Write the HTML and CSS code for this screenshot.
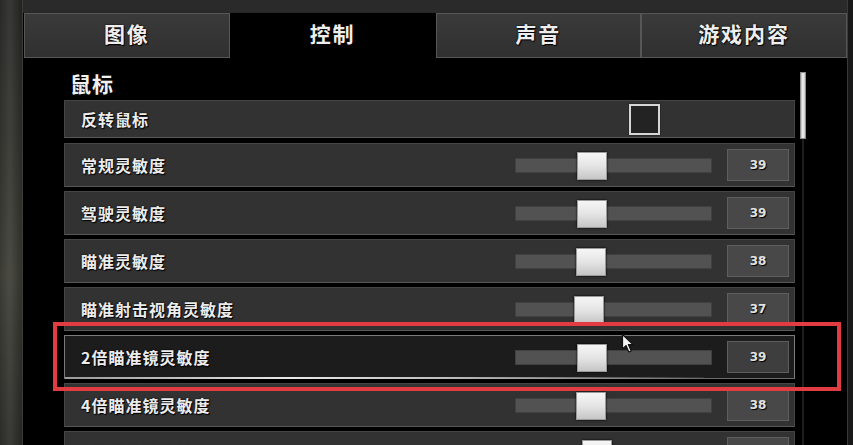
FILE: index.html
```html
<!DOCTYPE html>
<html lang="zh-CN">
<head>
<meta charset="utf-8">
<title>设置 - 控制</title>
<link rel="stylesheet" href="styles.css">
</head>
<body>
<div class="screen">
  <div class="edge-left"></div>
  <div class="main">
    <nav class="tabs">
      <div class="tab">图像</div>
      <div class="tab active">控制</div>
      <div class="tab">声音</div>
      <div class="tab">游戏内容</div>
    </nav>
    <div class="panel">
      <div class="content">
        <h2 class="section-title">鼠标</h2>
        <div class="rows">
          <div class="row row-toggle">
            <span class="label">反转鼠标</span>
            <span class="checkbox"></span>
          </div>
          <div class="row">
            <span class="label">常规灵敏度</span>
            <div class="slider"><div class="thumb" style="left:61px"></div></div>
            <div class="value">39</div>
          </div>
          <div class="row">
            <span class="label">驾驶灵敏度</span>
            <div class="slider"><div class="thumb" style="left:61px"></div></div>
            <div class="value">39</div>
          </div>
          <div class="row">
            <span class="label">瞄准灵敏度</span>
            <div class="slider"><div class="thumb" style="left:60px"></div></div>
            <div class="value">38</div>
          </div>
          <div class="row">
            <span class="label">瞄准射击视角灵敏度</span>
            <div class="slider"><div class="thumb" style="left:58px"></div></div>
            <div class="value">37</div>
          </div>
          <div class="row focus">
            <span class="label">2倍瞄准镜灵敏度</span>
            <div class="slider"><div class="thumb" style="left:61px"></div></div>
            <div class="value">39</div>
          </div>
          <div class="row">
            <span class="label">4倍瞄准镜灵敏度</span>
            <div class="slider"><div class="thumb" style="left:60px"></div></div>
            <div class="value">38</div>
          </div>
          <div class="row">
            <span class="label">8倍瞄准镜灵敏度</span>
            <div class="slider"><div class="thumb" style="left:66px"></div></div>
            <div class="value">41</div>
          </div>
        </div>
      </div>
      <div class="scrollbar">
        <div class="scroll-thumb"></div>
        <div class="scroll-track"></div>
      </div>
    </div>
  </div>
  <div class="edge-right"></div>

  <div class="callout"></div>
  <svg class="cursor" width="16" height="22" viewBox="0 0 16 22">
    <path d="M1.5 1.5 L1.5 16 L5 12.6 L7.8 19 L10.2 18 L7.4 11.6 L12 11.6 Z" fill="#f4f4f4" stroke="#111" stroke-width="1.2" stroke-linejoin="round"/>
  </svg>
</div>
</body>
</html>
```

FILE: styles.css
```css
* { box-sizing: border-box; }

html, body {
  margin: 0;
  padding: 0;
  background: #111;
}

.screen {
  position: relative;
  width: 853px;
  height: 445px;
  overflow: hidden;
  display: flex;
  font-family: "Noto Sans CJK SC", "Noto Sans", sans-serif;
  color: #ececec;
}

.edge-left {
  width: 23px;
  flex: none;
  background:
    linear-gradient(to right, rgba(0,0,0,0.1), rgba(255,255,255,0.05) 45%, rgba(0,0,0,0.25)),
    linear-gradient(to bottom, #2d2d2b 0%, #363631 30%, #42423b 62%, #30302c 100%);
  border-right: 1px solid #3c3c3a;
}

.edge-right {
  width: 6px;
  flex: none;
  background: #181818;
  border-left: 1px solid #3a3a3a;
}

.main {
  flex: 1;
  min-width: 0;
  display: flex;
  flex-direction: column;
  background: #2a2a2a;
  padding-top: 12px;
}

.tabs {
  flex: none;
  display: grid;
  grid-template-columns: repeat(4, 1fr);
  height: 46px;
  padding-left: 1px;
  background: #000;
  border-top: 1px solid #262626;
}

.tab {
  display: flex;
  align-items: center;
  justify-content: center;
  padding-bottom: 6px;
  background: linear-gradient(to bottom, #3a3a3a, #303030);
  border: 1px solid #575757;
  font-size: 21px;
  font-weight: 700;
  letter-spacing: 2px;
  color: #eeeeee;
  text-shadow: 1px 1px 1px #000, 0 0 2px #000;
}

.tab.active {
  background: #000;
  border-color: #000;
}

.panel {
  flex: 1;
  min-height: 0;
  overflow: hidden;
  display: flex;
  background: #000;
  padding-left: 41px;
  padding-top: 12px;
}

.content {
  width: 731px;
  flex: none;
}

.section-title {
  margin: 0 0 4px 0;
  padding-left: 6px;
  font-size: 21px;
  line-height: 26px;
  font-weight: 700;
  letter-spacing: 1px;
  color: #f0f0f0;
  text-shadow: 1px 1px 1px #000;
}

.rows {
  display: flex;
  flex-direction: column;
  gap: 4px;
}

.row {
  position: relative;
  flex: none;
  display: flex;
  align-items: center;
  height: 44px;
  padding: 0 5px 0 16px;
  background: #323232;
  border: 1px solid #454545;
  border-bottom-color: #575757;
}

.row-toggle {
  height: 38px;
  margin-bottom: 1px;
}

.label {
  flex: 1;
  font-size: 16px;
  font-weight: 700;
  letter-spacing: 1px;
  color: #ececec;
  text-shadow: 1px 1px 1px #000, 0 0 2px #000;
}

.checkbox {
  width: 31px;
  height: 31px;
  margin-right: 129px;
  border: 2px solid #d6d6d6;
  background: #232323;
  box-shadow: 0 0 1px #000;
}

.slider {
  position: relative;
  width: 197px;
  height: 15px;
  margin-right: 15px;
  background: #525252;
  border: 1px solid #404040;
}

.thumb {
  position: absolute;
  top: -7px;
  width: 30px;
  height: 28px;
  background: linear-gradient(to bottom, #f6f6f6 0%, #e4e4e4 50%, #c6c6c6 100%);
  border: 1px solid #9a9a9a;
  box-shadow: 0 0 2px #000;
}

.value {
  width: 62px;
  height: 32px;
  display: flex;
  align-items: center;
  justify-content: center;
  background: #484848;
  border: 1px solid #5e5e5e;
  font-family: "DejaVu Sans", sans-serif;
  font-size: 12px;
  font-weight: 700;
  color: #e2e2e2;
  text-shadow: 1px 1px 1px #000;
}

.row.focus {
  background: #1c1c1c;
  border-color: #7a7a7a;
  border-bottom-color: #6a6a6a;
}

.row.focus .value {
  background: #3e3e3e;
}

.row.focus::after {
  content: "";
  position: absolute;
  left: 0;
  right: 90px;
  bottom: -1px;
  height: 2px;
  background: linear-gradient(to right, #9a9a9a 0%, #e8e8e8 35%, #bdbdbd 60%, rgba(120,120,120,0.2) 100%);
}

.scrollbar {
  width: 6px;
  flex: none;
  margin-left: 5px;
  padding-top: 2px;
  display: flex;
  flex-direction: column;
  align-items: center;
}

.scroll-thumb {
  width: 6px;
  height: 67px;
  flex: none;
  background: linear-gradient(to right, #b8b8b8, #f2f2f2 45%, #c8c8c8);
  border: 1px solid #8c8c8c;
}

.scroll-track {
  flex: 1;
  width: 2px;
  background: #1e1e1e;
}

.callout {
  position: absolute;
  left: 53px;
  top: 322px;
  width: 788px;
  height: 69px;
  border: 4px solid #e23c43;
}

.cursor {
  position: absolute;
  left: 621px;
  top: 333px;
}
```
